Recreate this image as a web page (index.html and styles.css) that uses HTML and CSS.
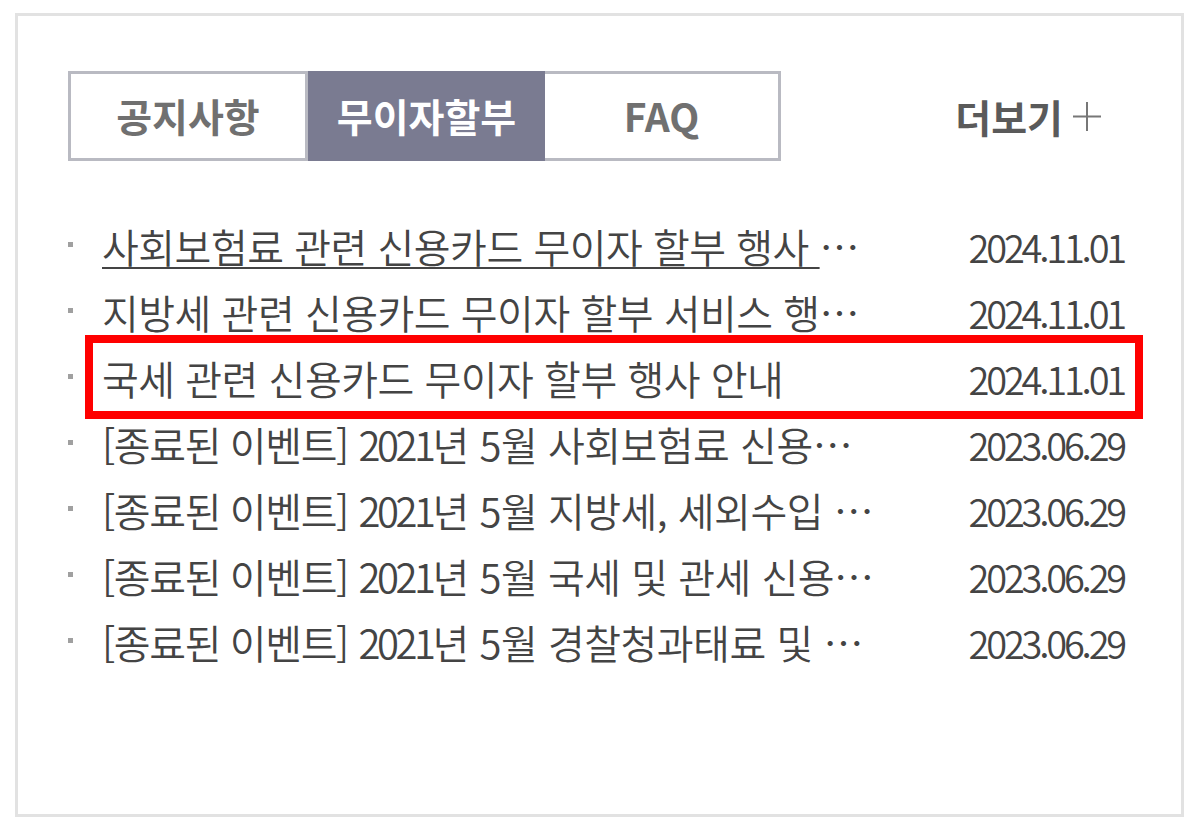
FILE: index.html
```html
<!DOCTYPE html>
<html lang="ko">
<head>
<meta charset="utf-8">
<title>무이자할부</title>
<link rel="stylesheet" href="styles.css">
</head>
<body>
<div class="board">
  <div class="board-head">
    <ul class="tabs">
      <li class="tab">공지사항</li>
      <li class="tab active">무이자할부</li>
      <li class="tab">FAQ</li>
    </ul>
    <a class="more">더보기<svg class="plus" width="28" height="30" viewBox="0 0 28 30" aria-hidden="true"><path d="M0 15.5H28M14 1V30" stroke="#777" stroke-width="2" fill="none"/></svg></a>
  </div>
  <ul class="list">
    <li class="row"><span class="title hover">사회보험료 관련 신용카드 무이자 할부 행사 안내 드립니다</span><span class="date">2024.11.01</span></li>
    <li class="row"><span class="title">지방세 관련 신용카드 무이자 할부 서비스 행사 안내</span><span class="date">2024.11.01</span></li>
    <li class="row marked"><span class="title">국세 관련 신용카드 무이자 할부 행사 안내</span><span class="date">2024.11.01</span></li>
    <li class="row"><span class="title"><span class="tag">[종료된 이벤트]</span> <span class="num">2021</span>년 5월 사회보험료 신용카드 무이자 할부 행사</span><span class="date">2023.06.29</span></li>
    <li class="row"><span class="title"><span class="tag">[종료된 이벤트]</span> <span class="num">2021</span>년 5월 지방세, 세외수입 신용카드 무이자 할부</span><span class="date">2023.06.29</span></li>
    <li class="row"><span class="title"><span class="tag">[종료된 이벤트]</span> <span class="num">2021</span>년 5월 국세 및 관세 신용카드 무이자 할부</span><span class="date">2023.06.29</span></li>
    <li class="row"><span class="title"><span class="tag">[종료된 이벤트]</span> <span class="num">2021</span>년 5월 경찰청과태료 및 범칙금 무이자 할부</span><span class="date">2023.06.29</span></li>
  </ul>
</div>
</body>
</html>
```
FILE: styles.css
```css
html, body {
  margin: 0;
  padding: 0;
  background: #ffffff;
}
body {
  font-family: "Noto Sans CJK KR", "Noto Sans", sans-serif;
  color: #444444;
}
.board {
  box-sizing: border-box;
  width: 1169px;
  height: 804px;
  margin: 13px 0 0 15px;
  border: 3px solid #e2e2e2;
  padding: 55px 57px 0 50px;
}
.board-head {
  display: flex;
  align-items: center;
  justify-content: space-between;
}
.tabs {
  display: flex;
  list-style: none;
  margin: 0;
  padding: 0;
}
.tab {
  box-sizing: border-box;
  height: 90px;
  display: flex;
  align-items: center;
  justify-content: center;
  font-size: 39px;
  font-weight: 700;
  color: #707070;
  border: 3px solid #b9bac2;
  padding-bottom: 2px;
}
.tab:nth-child(1) { width: 240px; }
.tab:nth-child(2) { width: 237px; }
.tab:nth-child(3) { width: 236px; border-left: none; }
.tab.active {
  background: #7a7b91;
  color: #ffffff;
  border: none;
}
.more {
  display: flex;
  align-items: center;
  margin-right: 23px;
  font-size: 39px;
  font-weight: 700;
  color: #5a5a5a;
}
.plus {
  display: block;
  margin-left: 10px;
}
.list {
  list-style: none;
  margin: 52px 0 0 0;
  padding: 0;
}
.row {
  position: relative;
  display: flex;
  align-items: center;
  height: 66px;
  font-size: 40px;
  font-weight: 350;
  padding-left: 34px;
}
.row::before {
  content: "";
  position: absolute;
  left: 0;
  top: 29px;
  width: 5px;
  height: 5px;
  background: #a0a0a0;
}
.title {
  max-width: 780px;
  white-space: nowrap;
  overflow: hidden;
  text-overflow: ellipsis;
  line-height: 66px;
  letter-spacing: -0.5px;
}
.title.hover {
  text-decoration: underline;
  text-decoration-thickness: 2px;
  text-underline-offset: 4px;
}
.tag {
  letter-spacing: -1.4px;
}
.num {
  letter-spacing: -3.5px;
}
.date {
  margin-left: auto;
  font-size: 38px;
  letter-spacing: -3.2px;
}
.marked::after {
  content: "";
  position: absolute;
  left: 17px;
  right: -19px;
  top: -10px;
  bottom: -8px;
  border: 8px solid #ff0000;
  pointer-events: none;
}
```
